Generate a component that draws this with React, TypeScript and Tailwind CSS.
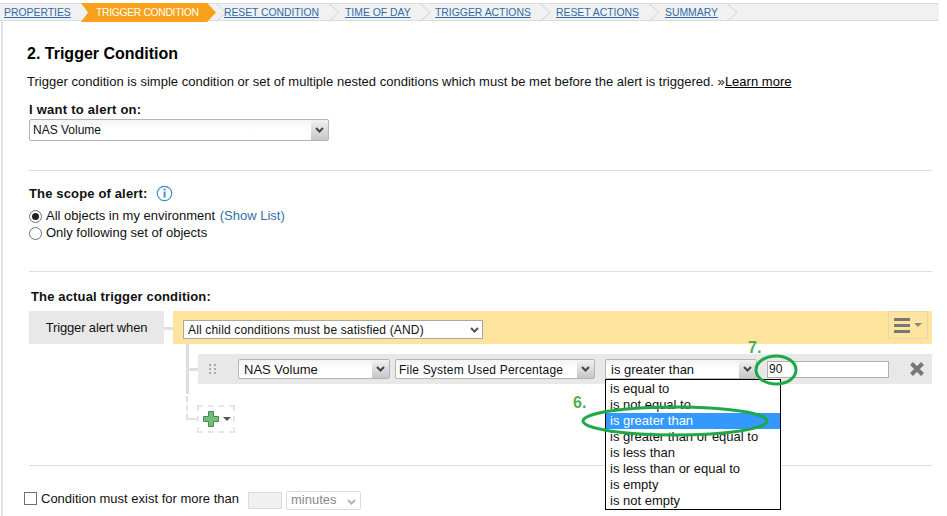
import React from "react";

function Chevron() {
  return (
    <svg width="14" height="19" viewBox="0 0 14 19" className="block shrink-0">
      <path d="M1 0.5 L11 9.5 L1 18.5" fill="none" stroke="#d2d2d2" strokeWidth="1" />
    </svg>
  );
}

function Steps() {
  return (
    <div className="mt-[3px] h-[18px] w-[939px] flex items-center bg-[#f1f1f1] border-y border-[#dcdcdc] text-[10.4px] leading-[16px]">
      <a className="ml-[4px] mt-[1px] w-[68px] text-[#2e6ca8] underline whitespace-nowrap">PROPERTIES</a>
      <div className="relative ml-[9px] w-[135px] h-[19px] shrink-0">
        <svg width="135" height="19" viewBox="0 0 135 19" className="absolute inset-0">
          <path d="M0 0 H126 L135 9.5 L126 19 H0 L7 9.5 Z" fill="#f9a11b" />
        </svg>
        <span className="absolute left-[15px] top-[2px] text-white whitespace-nowrap tracking-[-0.35px]">TRIGGER CONDITION</span>
      </div>
      <span className="ml-[-1px]"><Chevron /></span>
      <a className="ml-[-5px] mt-[1px] w-[95px] text-[#2e6ca8] underline whitespace-nowrap tracking-[-0.05px]">RESET CONDITION</a>
      <span className="ml-[9px]"><Chevron /></span>
      <a className="ml-[3px] mt-[1px] w-[65px] text-[#2e6ca8] underline whitespace-nowrap">TIME OF DAY</a>
      <span className="ml-[9px]"><Chevron /></span>
      <a className="ml-[2px] mt-[1px] w-[96px] text-[#2e6ca8] underline whitespace-nowrap">TRIGGER ACTIONS</a>
      <span className="ml-[8px]"><Chevron /></span>
      <a className="ml-[3px] mt-[1px] w-[84px] text-[#2e6ca8] underline whitespace-nowrap">RESET ACTIONS</a>
      <span className="ml-[8px]"><Chevron /></span>
      <a className="ml-[3px] mt-[1px] w-[53px] text-[#2e6ca8] underline whitespace-nowrap">SUMMARY</a>
      <span className="ml-[8px]"><Chevron /></span>
    </div>
  );
}

function Caret({ color = "#444" }: { color?: string }) {
  return (
    <svg width="9" height="6" viewBox="0 0 9 6">
      <path d="M1 1 L4.5 4.5 L8 1" fill="none" stroke={color} strokeWidth="2" />
    </svg>
  );
}

function Select({ label, cls, text }: { label: string; cls: string; text: string }) {
  return (
    <div className={`${cls} flex shrink-0 rounded-[2px] border border-[#b4b4b4] bg-gradient-to-b from-[#f3f3f3] via-white to-white`}>
      <span className={`${text} flex-1 whitespace-nowrap overflow-hidden text-[#111]`}>{label}</span>
      <span className="w-[17px] flex items-center justify-center bg-gradient-to-b from-[#f2f2f2] to-[#c6c6c6]">
        <Caret />
      </span>
    </div>
  );
}

function Radio({ on }: { on?: boolean }) {
  return (
    <span className="w-[13px] h-[13px] rounded-full border border-[#707070] bg-white flex items-center justify-center shrink-0">
      {on && <span className="w-[7px] h-[7px] rounded-full bg-[#222]" />}
    </span>
  );
}

const options = [
  "is equal to",
  "is not equal to",
  "is greater than",
  "is greater than or equal to",
  "is less than",
  "is less than or equal to",
  "is empty",
  "is not empty",
];

export default function App() {
  return (
    <div className="relative w-[947px] h-[516px] overflow-hidden bg-white text-[#111] font-['Liberation_Sans',Arial,sans-serif] text-[13px] leading-[16px]">
      <Steps />
      <div className="ml-[1px] w-[938px] h-[495px] border-l-2 border-[#e4e4e4] pl-[24px]">
        <h2 className="pt-[23px] text-[16px] leading-[20px] font-bold text-black">2. Trigger Condition</h2>
        <p className="mt-[10px] text-[13px] leading-[16px] whitespace-nowrap tracking-[0.02px]">
          Trigger condition is simple condition or set of multiple nested conditions which must be met before the alert is triggered. »<a className="underline text-black">Learn more</a>
        </p>
        <div className="ml-[2px] w-[903px]">
          <div className="mt-[12px] font-bold leading-[15px] tracking-[0.25px]">I want to alert on:</div>
          <Select label="NAS Volume" cls="mt-[2px] w-[300px] h-[22px]" text="pl-[3px] text-[12px] leading-[20px]" />
          <div className="mt-[29px] border-t border-[#dedede]" />
          <div className="mt-[14px] h-[17px] flex items-center font-bold tracking-[0.15px]">
            The scope of alert:
            <svg width="17" height="17" viewBox="0 0 17 17" className="ml-[9px]">
              <circle cx="8.5" cy="8.5" r="7.2" fill="white" stroke="#3a8fc4" strokeWidth="1.2" />
              <rect x="7.6" y="3.6" width="1.9" height="1.9" fill="#3a8fc4" />
              <rect x="7.6" y="6.6" width="1.9" height="6" fill="#3a8fc4" />
            </svg>
          </div>
          <div className="mt-[6px] flex items-center gap-[4px] h-[16px]">
            <Radio on />
            <span>All objects in my environment <a className="ml-[1px] text-[#336ea8]">(Show List)</a></span>
          </div>
          <div className="mt-[1px] flex items-center gap-[4px] h-[16px]">
            <Radio />
            <span>Only following set of objects</span>
          </div>
          <div className="mt-[30px] border-t border-[#dedede]" />
          <div className="mt-[17px] ml-[2px] font-bold leading-[16px] tracking-[0.15px]">The actual trigger condition:</div>
          <div className="mt-[6px] flex h-[33px]">
            <div className="w-[135px] bg-[#e8e8e8] flex items-center justify-center tracking-[-0.15px]">Trigger alert when</div>
            <div className="w-[9px] h-[3px] mt-[16px] bg-[#e0e0e0]" />
            <div className="flex-1 bg-[#fee49c] flex items-start pl-[10px] pr-[4px]">
              <div className="mt-[9px] w-[300px] h-[19px] border border-[#a8a8a8] bg-white pl-[4px] pr-[3px] text-[12px] tracking-[0.16px] leading-[17px] flex items-center justify-between">
                <span className="pt-[1px]">All child conditions must be satisfied (AND)</span>
                <Caret color="#555" />
              </div>
              <div className="ml-auto w-[40px] h-[28px] border border-[#e4d7ae] flex items-center justify-center gap-[4px]">
                <div className="flex flex-col gap-[3px]">
                  <i className="block w-[16px] h-[3px] bg-[#777]" />
                  <i className="block w-[16px] h-[3px] bg-[#777]" />
                  <i className="block w-[16px] h-[3px] bg-[#777]" />
                </div>
                <svg width="8" height="4" viewBox="0 0 8 4"><path d="M0 0H8L4 4Z" fill="#888" /></svg>
              </div>
            </div>
          </div>
          <div className="relative ml-[157px] h-[76px]">
            <div className="absolute left-0 top-0 w-[3px] h-[50px] bg-[#dedede]" />
            <div className="absolute left-[3px] top-[24px] w-[9px] h-[3px] bg-[#dedede]" />
            <div className="absolute left-0 top-[52px] w-[11px] h-[24px] border-l-2 border-b-2 border-dashed border-[#e2e2e2]" />
            <div className="ml-[12px] pt-[10px]">
              <div className="h-[30px] bg-[#e8e8e8] flex items-center">
                <svg width="8" height="10" viewBox="0 0 8 10" className="ml-[11px]">
                  <g fill="#aaa">
                    <rect x="0" y="0" width="2" height="2" /><rect x="5" y="0" width="2" height="2" />
                    <rect x="0" y="4" width="2" height="2" /><rect x="5" y="4" width="2" height="2" />
                    <rect x="0" y="8" width="2" height="2" /><rect x="5" y="8" width="2" height="2" />
                  </g>
                </svg>
                <Select label="NAS Volume" cls="ml-[21px] w-[152px] h-[20px]" text="pl-[5px] text-[13px] leading-[20px]" />
                <Select label="File System Used Percentage" cls="ml-[5px] w-[200px] h-[20px]" text="pl-[3px] text-[12px] tracking-[0.2px] leading-[20px]" />
                <Select label="is greater than" cls="ml-[10px] w-[152px] h-[20px]" text="pl-[5px] text-[13px] leading-[20px]" />
                <div className="ml-[10px] w-[122px] h-[17px] border border-[#b0b0b0] bg-white text-[12px] leading-[15px] pl-[1px]">90</div>
                <svg width="16" height="16" viewBox="0 0 16 16" className="ml-[20px]">
                  <path d="M2.5 2.5 L13.5 13.5 M13.5 2.5 L2.5 13.5" stroke="#777" strokeWidth="4" />
                </svg>
              </div>
            </div>
          </div>
          <div className="relative ml-[168px] mt-[-15px] w-[38px] h-[28px] border-2 border-dashed border-[#e6e6e6] flex items-center pl-[4px] gap-[1px]">
            <svg width="16" height="16" viewBox="0 0 16 16">
              <path d="M5.5 0.5 H10.5 V5.5 H15.5 V10.5 H10.5 V15.5 H5.5 V10.5 H0.5 V5.5 H5.5 Z" fill="#78bb78" stroke="#4a8a4a" />
            </svg>
            <svg width="8" height="4" viewBox="0 0 8 4" className="ml-[3px]"><path d="M0 0H8L4 4Z" fill="#555" /></svg>
          </div>
          <div className="mt-[32px] border-t border-[#dedede]" />
        </div>
        <div className="mt-[22px] ml-[-3px] flex items-center h-[20px]">
          <span className="w-[13px] h-[13px] border border-[#707070] bg-white shrink-0" />
          <span className="ml-[4px] mt-[2px] whitespace-nowrap">Condition must exist for more than</span>
          <span className="ml-[9px] mt-[4px] w-[34px] h-[17px] border border-[#dcdcdc] bg-[#f0f0f0]" />
          <span className="ml-[4px] mt-[4px] w-[75px] h-[19px] border border-[#dcdcdc] flex items-center pl-[4px] text-[#8a8a8a] rounded-[2px]">
            minutes
            <span className="ml-auto mr-[4px] mt-[3px]"><Caret color="#b5b5b5" /></span>
          </span>
        </div>
      </div>

      {/* open dropdown list */}
      <div className="absolute left-[605px] top-[379px] w-[176px] h-[131px] border border-black bg-white pt-[1px]">
        {options.map((o) => (
          <div key={o} className={`h-[16px] pl-[4px] leading-[16px] whitespace-nowrap ${o === "is greater than" ? "bg-[#3399ff] text-white" : ""}`}>{o}</div>
        ))}
      </div>

      {/* annotations */}
      <svg width="947" height="516" viewBox="0 0 947 516" className="absolute inset-0 pointer-events-none">
        <ellipse cx="675" cy="421" rx="92" ry="14" fill="none" stroke="#1fa84a" strokeWidth="3" />
        <ellipse cx="776" cy="370" rx="20" ry="14" fill="none" stroke="#1fa84a" strokeWidth="3" />
      </svg>
      <span className="absolute left-[573px] top-[394px] text-[16px] leading-[18px] font-bold text-[#4caf50]">6.</span>
      <span className="absolute left-[748px] top-[339px] text-[16px] leading-[18px] font-bold text-[#4caf50]">7.</span>
    </div>
  );
}
